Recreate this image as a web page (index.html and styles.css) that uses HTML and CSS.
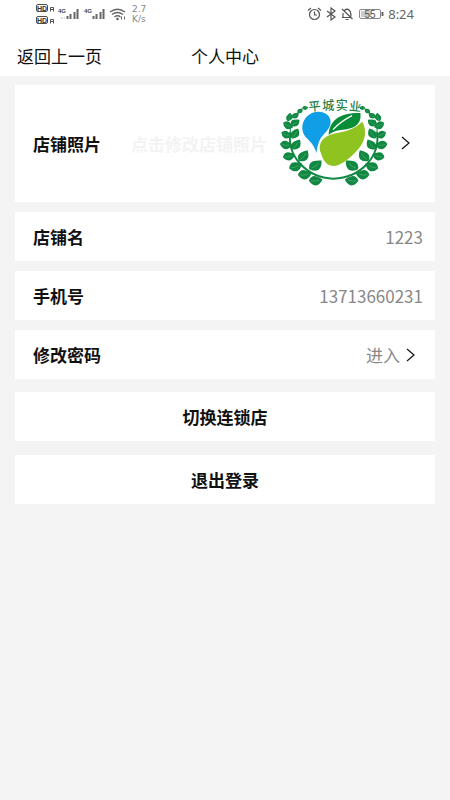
FILE: index.html
```html
<!DOCTYPE html>
<html lang="zh-CN">
<head>
<meta charset="utf-8">
<meta name="viewport" content="width=device-width, initial-scale=1">
<title>个人中心</title>
<link rel="stylesheet" href="styles.css">
</head>
<body>
<div class="status">
  <div class="status-group">
    <svg class="icon-hd" width="20" height="24" viewBox="0 0 20 24" aria-hidden="true">
      <g fill="none" stroke="#4c4c4c"><rect x="1.5" y="2.5" width="11" height="7" rx="1.5"/><rect x="1.5" y="14.5" width="11" height="7" rx="1.5"/></g>
      <g fill="#333" class="hd-text"><text x="2" y="9">HD</text><text x="2" y="21">HD</text></g>
      <g fill="none" stroke="#555"><path d="M15.5 9.500v-4h3v4M15 7.500h3M15.5 21.500v-4h3v4M15 19.500h3"/></g>
    </svg>
    <svg class="icon-signal" width="24" height="24" viewBox="0 0 24 24" aria-hidden="true">
      <text class="signal-text" x="1" y="11">4G</text>
      <path d="M4 16h2M7 16h1" stroke="#bbb"/>
      <path d="M10.500 17v-3M13.500 17v-5M17.500 17v-7M20.500 17V7" stroke="#666" stroke-width="2"/>
    </svg>
    <svg class="icon-signal" width="24" height="24" viewBox="0 0 24 24" aria-hidden="true">
      <text class="signal-text" x="1" y="11">4G</text>
      <path d="M10.500 17v-3M13.500 17v-5M17.500 17v-7M20.500 17V7" stroke="#666" stroke-width="2"/>
    </svg>
    <svg class="icon-wifi" width="18" height="24" viewBox="0 0 18 24" aria-hidden="true">
      <g fill="none" stroke="#666" stroke-width="1.3"><path d="M1 10q7.500-5.500 15 0M3 12.500q5.500-4 11 0M5.500 15q3-2.500 6 0"/></g>
      <circle cx="8.500" cy="17" r="1.200" fill="#555"/>
      <path d="M12.500 14.500v3M15.500 14.500v3" stroke="#666"/>
    </svg>
    <div class="speed"><span>2.7</span><span>K/s</span></div>
  </div>
  <div class="status-group">
    <svg width="15" height="14" viewBox="0 0 15 14" aria-hidden="true">
      <g fill="none" stroke="#555" stroke-width="1.2"><circle cx="7.500" cy="7.500" r="5"/><path d="M7.500 4.500v3.500h2.500M1 3.500L4 1M11 1l3 2.500"/></g>
    </svg>
    <svg class="icon-bluetooth" width="10" height="14" viewBox="0 0 10 14" aria-hidden="true">
      <path d="M1 4l8 6-4 3V1l4 3-8 6" fill="none" stroke="#555" stroke-width="1.2"/>
    </svg>
    <svg class="icon-bell" width="14" height="14" viewBox="0 0 14 14" aria-hidden="true">
      <path d="M2 2l10.500 10M2 10.500h8M3 10.500V6M4.500 3.500Q7 1 9.500 3.500Q11 5 11 9.500M5.500 12.500h3" fill="none" stroke="#555" stroke-width="1.2"/>
    </svg>
    <svg class="icon-battery" width="26" height="14" viewBox="0 0 26 14" aria-hidden="true">
      <rect x="1.500" y="2.500" width="21" height="9" rx="1.500" fill="#fff" stroke="#888"/>
      <rect x="3" y="4" width="10" height="6" fill="#ccc"/>
      <path d="M24.500 5v4" stroke="#666" stroke-width="2"/>
      <text class="battery-text" x="12" y="11">55</text>
    </svg>
    <span class="clock">8:24</span>
  </div>
</div>

<header class="header">
  <button class="back" type="button">返回上一页</button>
  <h1 class="title">个人中心</h1>
</header>

<main class="content">
  <button class="card card-photo" type="button">
    <span class="label">店铺照片</span>
    <span class="hint">点击修改店铺照片</span>
    <svg class="logo" width="110" height="92" viewBox="27 18 330 276" role="img" aria-label="平城实业">
      <defs>
        <g id="leaf">
          <path d="M-18 7Q-18-10-4-13Q8-14 19-11Q17 8 6 13Q-7 16-18 7Z" fill="#118842"/>
          <path d="M-12 5Q0 3 10-5" fill="none" stroke="#65b587" stroke-width="1.5"/>
        </g>
        <g id="branch">
          <use href="#leaf" transform="translate(105 51) rotate(15) scale(.45)"/>
          <use href="#leaf" transform="translate(90 60) rotate(-15) scale(.5)"/>
          <use href="#leaf" transform="translate(76 74) rotate(-10) scale(.6)"/>
          <use href="#leaf" transform="translate(58 79) rotate(-50) scale(.65)"/>
          <use href="#leaf" transform="translate(75 96) rotate(-5) scale(.75)"/>
          <use href="#leaf" transform="translate(53 103) rotate(50) scale(.8)"/>
          <use href="#leaf" transform="translate(75 129) rotate(-30) scale(.85)"/>
          <use href="#leaf" transform="translate(48 131) rotate(45) scale(.8)"/>
          <use href="#leaf" transform="translate(78 162) rotate(-25) scale(.9)"/>
          <use href="#leaf" transform="translate(47 162) rotate(30) scale(.9)"/>
          <use href="#leaf" transform="translate(100 196) rotate(-25)"/>
          <use href="#leaf" transform="translate(56 196) rotate(12) scale(.9)"/>
          <use href="#leaf" transform="translate(136 224) rotate(-10) scale(1.1)"/>
          <use href="#leaf" transform="translate(76 227) rotate(5)"/>
          <use href="#leaf" transform="translate(103 251) rotate(20)"/>
          <use href="#leaf" transform="translate(136 269) rotate(20)"/>
        </g>
      </defs>
      <path d="M61 123Q53 178 91 219Q130 261 190 263Q252 261 291 219Q329 178 321 123" fill="none" stroke="#118842" stroke-width="6"/>
      <path d="M61 125Q57 104 68 86M321 125Q325 104 314 86" fill="none" stroke="#118842" stroke-width="3"/>
      <use href="#branch"/>
      <use href="#branch" transform="translate(382 0) scale(-1 1)"/>
      <path d="M139 187Q135 165 113 144C92 127 92 98 109 78C128 57 163 58 176 76C189 96 179 113 162 129Q143 148 139 187Z" fill="#109ee6"/>
      <path d="M176 131C178 95 201 64 271 66C276 100 252 114 219 116Q193 118 176 131Z" fill="#078c38"/>
      <path d="M189 116Q212 91 246 74" fill="none" stroke="#fff" stroke-width="4"/>
      <path d="M153 187C140 154 163 131 205 125Q247 120 277 92C292 121 286 149 265 174C244 198 216 224 191 225C169 226 158 205 153 187Z" fill="#8fc31f"/>
      <g class="logo-text">
        <text transform="translate(117 61) rotate(-6)">平</text>
        <text transform="translate(157 57)">城</text>
        <text transform="translate(197 57)">实</text>
        <text transform="translate(236 58) rotate(6)">业</text>
      </g>
    </svg>
    <svg class="chevron" width="10" height="14" viewBox="0 0 10 14" aria-hidden="true"><path d="M1 1l7 6-7 6"/></svg>
  </button>
  <div class="card">
    <span class="label">店铺名</span>
    <span class="value">1223</span>
  </div>
  <div class="card">
    <span class="label">手机号</span>
    <span class="value">13713660231</span>
  </div>
  <button class="card card-link" type="button">
    <span class="label">修改密码</span>
    <span class="value">进入</span>
    <svg class="chevron" width="10" height="14" viewBox="0 0 10 14" aria-hidden="true"><path d="M1 1l7 6-7 6"/></svg>
  </button>
  <div class="actions">
    <button class="card action" type="button">切换连锁店</button>
    <button class="card action" type="button">退出登录</button>
  </div>
</main>
</body>
</html>
```
FILE: styles.css
```css
* {
  box-sizing: border-box;
}

body {
  margin: 0;
  min-height: 100vh;
  background: #f4f4f4;
  color: #111;
  font: 17px/25px "Noto Sans CJK SC", sans-serif;
}

button {
  margin: 0;
  border: 0;
  color: inherit;
  font: inherit;
  cursor: pointer;
}

svg {
  display: block;
  flex: none;
}

.status {
  display: flex;
  justify-content: space-between;
  padding: 2px 36px 2px 35px;
  background: #fff;
  color: #666;
}

.status-group {
  display: flex;
  align-items: center;
}

.icon-signal,
.icon-wifi {
  margin-left: 2px;
}

.hd-text {
  font: bold 7px "Liberation Sans", sans-serif;
}

.signal-text {
  fill: #444;
  font: bold 6px "Liberation Sans", sans-serif;
}

.battery-text {
  fill: #555;
  font: 10px "Liberation Sans", sans-serif;
  text-anchor: middle;
}

.speed {
  display: flex;
  flex-direction: column;
  margin-left: 5px;
  color: #888;
  font: 9px/10px "DejaVu Sans", sans-serif;
}

.icon-bluetooth,
.icon-bell,
.icon-battery,
.clock {
  margin-left: 4px;
}

.clock {
  font: 13px/20px "Noto Sans", sans-serif;
}

.header {
  display: grid;
  grid-template-columns: 1fr auto 1fr;
  align-items: center;
  padding: 15px 17px 8px;
  background: #fff;
}

.back {
  justify-self: start;
  padding: 0;
  background: none;
}

.title {
  margin: 0;
  font-size: 17px;
  font-weight: 400;
}

.content {
  display: flex;
  flex-direction: column;
  gap: 10px;
  padding: 9px 15px;
}

.card {
  display: flex;
  align-items: center;
  width: 100%;
  padding: 12px 12px 12px 18px;
  background: #fff;
  text-align: left;
}

.card-photo {
  padding-bottom: 13px;
  padding-right: 24px;
}

.card-link {
  padding-right: 19px;
}

.label,
.action {
  font-weight: 700;
}

.hint {
  margin-left: auto;
  color: #f3f3f3;
  font-weight: 700;
}

.logo {
  margin: 0 12px;
}

.logo-text {
  fill: #25804a;
  font: 500 36px "Noto Sans CJK SC", sans-serif;
}

.chevron path {
  fill: none;
  stroke: #111;
  stroke-width: 1.2;
}

.value {
  margin-left: auto;
  color: #888;
}

.value + .chevron {
  margin-left: 6px;
}

.actions {
  display: flex;
  flex-direction: column;
  gap: 14px;
  margin-top: 3px;
}

.action {
  justify-content: center;
  padding: 12px;
}
```
